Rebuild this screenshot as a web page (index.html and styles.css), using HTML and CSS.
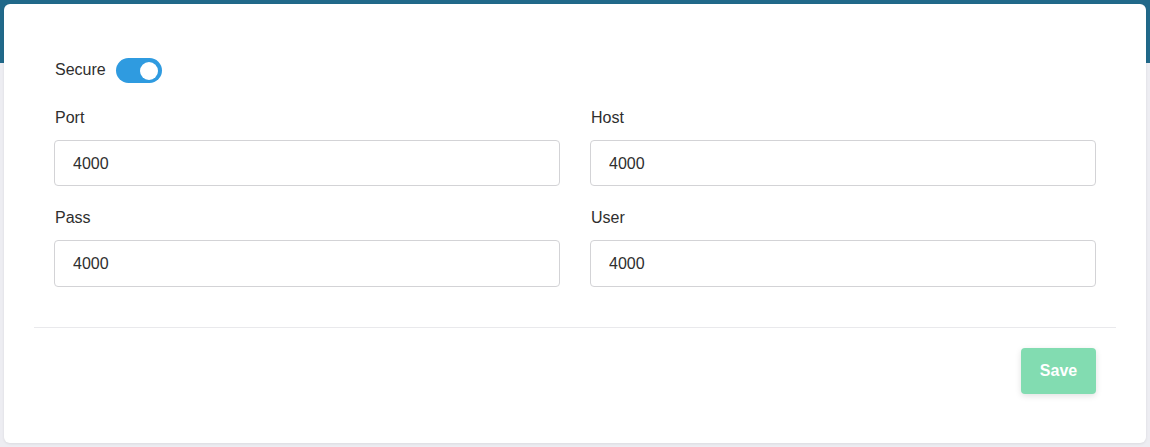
FILE: index.html
```html
<!DOCTYPE html>
<html>
<head>
<meta charset="utf-8">
<link rel="stylesheet" href="styles.css">
</head>
<body>
<div class="card">
  <div class="form">
    <div class="toggle-row">
      <span class="toggle-label">Secure</span>
      <span class="toggle"><span class="knob"></span></span>
    </div>
    <div class="grid">
      <div class="field">
        <label class="label">Port</label>
        <input class="input" type="text" value="4000">
      </div>
      <div class="field">
        <label class="label">Host</label>
        <input class="input" type="text" value="4000">
      </div>
      <div class="field">
        <label class="label">Pass</label>
        <input class="input" type="text" value="4000">
      </div>
      <div class="field">
        <label class="label">User</label>
        <input class="input" type="text" value="4000">
      </div>
    </div>
  </div>
  <div class="divider"></div>
  <div class="footer">
    <button class="save">Save</button>
  </div>
</div>
</body>
</html>
```
FILE: styles.css
```css
* { box-sizing: border-box; }
html, body { margin: 0; padding: 0; }
body {
  width: 1150px;
  height: 447px;
  overflow: hidden;
  background: linear-gradient(to bottom, #21698a 0, #21698a 63px, #ededf2 63px, #ededf2 100%);
  font-family: "Liberation Sans", Arial, sans-serif;
  color: #2e2e2e;
  padding: 4px;
}
.card {
  background: #fff;
  border-radius: 6px;
  width: 1142px;
  height: 439px;
  box-shadow: 0 1px 3px rgba(0,0,0,0.08);
  padding: 0 30px;
}
.form {
  padding: 54px 20px 0 21px;
}
.toggle-row {
  display: flex;
  align-items: center;
  gap: 10px;
  height: 25px;
}
.toggle-label {
  font-size: 16px;
  line-height: 20px;
  margin-top: -1px;
}
.toggle {
  width: 46px;
  height: 25px;
  border-radius: 13px;
  background: #2f9be0;
  display: flex;
  align-items: center;
  justify-content: flex-end;
  padding-right: 4px;
}
.knob {
  width: 18px;
  height: 18px;
  border-radius: 50%;
  background: #fff;
}
.grid {
  margin-top: 24px;
  margin-left: -1px;
  display: grid;
  grid-template-columns: 1fr 1fr;
  column-gap: 30px;
  row-gap: 21px;
}
.field {
  display: flex;
  flex-direction: column;
}
.label {
  font-size: 16px;
  line-height: 20px;
  padding-top: 1px;
  margin-bottom: 12px;
  padding-left: 1px;
}
.input {
  height: 46px;
  border: 1px solid #d3d3d6;
  border-radius: 4px;
  padding: 1px 18px 0;
  font-family: "Liberation Sans", Arial, sans-serif;
  font-size: 16px;
  color: #2e2e2e;
  background: #fff;
  outline: none;
}
.field:nth-child(n+3) .input {
  height: 47px;
}
.divider {
  margin-top: 40px;
  height: 1px;
  background: #e9e9ec;
}
.footer {
  display: flex;
  justify-content: flex-end;
  padding: 20px 20px 0;
}
.save {
  width: 75px;
  height: 46px;
  border: none;
  border-radius: 4px;
  background: #82dcb1;
  color: #fff;
  font-family: "Liberation Sans", Arial, sans-serif;
  font-size: 16px;
  font-weight: bold;
  padding-top: 1px;
  box-shadow: 0 2px 6px rgba(0,0,0,0.12);
}
```
